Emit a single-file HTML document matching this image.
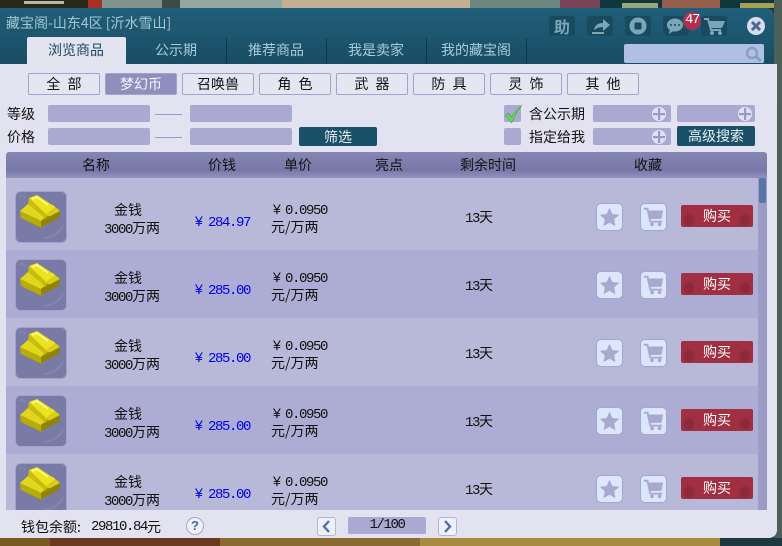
<!DOCTYPE html>
<html><head><meta charset="utf-8">
<style>
html,body{margin:0;padding:0;background:#222}
#p{position:relative;width:782px;height:546px;overflow:hidden;font-family:"WenQuanYi Zen Hei","Noto Sans CJK SC",sans-serif;font-size:14px;color:#111;background:#3a3028}
.a{position:absolute}
.t{position:absolute;white-space:nowrap;line-height:18px;height:18px}
.tab{position:absolute;top:37px;width:100px;height:27px;line-height:27px;text-align:center;color:#a9ccd8;font-size:14px}
.sep{position:absolute;top:38px;width:1px;height:26px;background:#0f3548}
.cat{position:absolute;top:73px;width:70px;height:20px;line-height:20px;border:1px solid #a3a3cd;border-radius:2px;text-align:center;background:#e6e6f2;color:#111;font-size:14px;word-spacing:4px}
.in{position:absolute;height:17px;background:#a9a9d2;border-radius:2px}
.ck{position:absolute;width:17px;height:17px;background:#a9a9d2;border-radius:2px;left:504px}
.btn{position:absolute;background:#1a5068;color:#e8f0f4;text-align:center;border-radius:2px;font-size:14px}
.hb{position:absolute;top:15px;width:26px;height:20px;border:1px solid #1c5a72;border-radius:4px;background:#184a60}
.row{position:absolute;left:0;width:752px;height:68px}
.m{font-family:"Liberation Mono",monospace;font-size:14px;letter-spacing:-1.4px}
.y{display:inline-block;width:12px;font-family:"WenQuanYi Zen Hei",sans-serif;letter-spacing:0}
.b{color:#0000f0}
.b .y{width:13px}
.ib{position:absolute;width:25px;height:26px;background:#dce6fc;border:1px solid #a4a8cc;border-radius:5px}
.buy{position:absolute;left:675px;width:72px;height:22px;line-height:23px;text-align:center;color:#fff;border-radius:2px;font-size:14px;background:radial-gradient(circle at 8px 15px,#8c2a3c 0,#8c2a3c 4px,transparent 7px),radial-gradient(circle at 64px 15px,#8c2a3c 0,#8c2a3c 4px,transparent 7px),#a02f42}
</style></head>
<body><div id="p">
<svg width="0" height="0" style="position:absolute">
<defs>
<symbol id="gold" viewBox="0 0 52 52">
<rect x="0.500" y="0.500" width="51" height="51" rx="5" fill="#7a7aa6" stroke="#a3a3ca"/>
<path d="M28 47q14-1 20-12M4 6q4-3 6 1" stroke="#8484ae" stroke-width="2" fill="none"/>
<polygon points="5,20 13,13 14,7 22,4 40,16 45,20 44,27 33,32 26,37 20,34 6,27" fill="#a89a00"/>
<polygon points="32,13 38,14 45,20 38,26 30,24" fill="#d8ce18"/>
<polygon points="26,30 45,20 44,27 26,36" fill="#8e8400"/>
<polygon points="5,20 13,13 32,24 26,30" fill="#e0d61c"/>
<polygon points="5,20 26,30 26,36 6,27" fill="#b8ac0c"/>
<polygon points="14,7 31,23 31,28 13,13" fill="#c8bc10"/>
<polygon points="14,7 22,4 40,16 31,23" fill="#ece41e"/>
<path d="M17 8l5-2 11 8" stroke="#fffa90" stroke-width="1.500" fill="none"/>
</symbol>
<symbol id="star" viewBox="0 0 27 28"><polygon points="13.500,4 16.600,10.800 24,11.600 18.500,16.500 20,24 13.500,20.200 7,24 8.500,16.500 3,11.600 10.400,10.800" fill="#a9a9d0"/></symbol>
<symbol id="cart" viewBox="0 0 27 28"><path d="M3 5h4l3 14h13" stroke="#a9a9d0" stroke-width="2" fill="none"/><polygon points="8,7 24,7 22,16 10,16" fill="#a9a9d0"/><circle cx="12" cy="22" r="2" fill="#a9a9d0"/><circle cx="20" cy="22" r="2" fill="#a9a9d0"/></symbol>
<symbol id="plus" viewBox="0 0 14 14"><circle cx="7" cy="7" r="7" fill="#dfe2f4"/><rect x="6" y="1" width="2.200" height="12" fill="#9a9ac8"/><rect x="1" y="6" width="12" height="2.200" fill="#9a9ac8"/></symbol>
</defs>
</svg>

<!-- background scene top -->
<div class="a" style="left:0;top:0;width:88px;height:9px;background:#2a2818"></div>
<div class="a" style="left:24px;top:1px;width:40px;height:3px;background:#b8b8a8"></div>
<div class="a" style="left:88px;top:0;width:14px;height:9px;background:#a83020"></div>
<div class="a" style="left:102px;top:0;width:60px;height:9px;background:#7f948c"></div>
<div class="a" style="left:162px;top:0;width:18px;height:9px;background:#3e4a44"></div>
<div class="a" style="left:180px;top:0;width:102px;height:9px;background:#93a8a2"></div>
<div class="a" style="left:282px;top:0;width:188px;height:9px;background:#c4af96"></div>
<div class="a" style="left:470px;top:0;width:90px;height:9px;background:#6f8780"></div>
<div class="a" style="left:560px;top:0;width:40px;height:9px;background:#7a4458"></div>
<div class="a" style="left:600px;top:0;width:62px;height:9px;background:#10383c"></div>
<div class="a" style="left:622px;top:3px;width:36px;height:5px;background:#9aa878"></div>
<div class="a" style="left:662px;top:0;width:58px;height:9px;background:#94604c"></div>
<div class="a" style="left:720px;top:0;width:62px;height:9px;background:#10383c"></div>
<div class="a" style="left:740px;top:3px;width:36px;height:5px;background:#a8a050"></div>
<div class="a" style="left:774px;top:0;width:8px;height:546px;background:#4a6058"></div>
<!-- bottom scene -->
<div class="a" style="left:0;top:538px;width:50px;height:8px;background:#7a5a20"></div>
<div class="a" style="left:50px;top:538px;width:170px;height:8px;background:#6a3a20"></div>
<div class="a" style="left:220px;top:538px;width:200px;height:8px;background:#8a6a30"></div>
<div class="a" style="left:420px;top:538px;width:300px;height:8px;background:#a88a40"></div>
<div class="a" style="left:720px;top:538px;width:62px;height:8px;background:#1e3a40"></div>

<!-- window -->
<div class="a" style="left:0;top:8px;width:774px;height:60px;background:linear-gradient(#215f7a,#174b62);border-radius:0 8px 0 0"></div>
<div class="a" style="left:0;top:64px;width:777px;height:474px;background:#e2e2f0;border-radius:0 0 8px 0"></div>
<div class="a" style="left:0;top:64px;width:777px;height:37px;background:#e3e4f1"></div>

<div class="t" style="left:6px;top:14px;color:#a6c6d2;font-size:14px">藏宝阁-山东4区 [沂水雪山]</div>

<div class="a" style="left:27px;top:37px;width:99px;height:27px;background:#e3e4f0;border-radius:2px 2px 0 0"></div>
<div class="tab" style="left:26px;color:#1a4a60">浏览商品</div>
<div class="tab" style="left:126px">公示期</div>
<div class="tab" style="left:226px">推荐商品</div>
<div class="tab" style="left:326px">我是卖家</div>
<div class="tab" style="left:426px">我的藏宝阁</div>
<div class="sep" style="left:226px"></div>
<div class="sep" style="left:326px"></div>
<div class="sep" style="left:426px"></div>
<div class="sep" style="left:526px"></div>

<!-- header icons -->
<div class="hb" style="left:548px;color:#7aa6b8;text-align:center;line-height:20px;font-size:16px;font-weight:bold">助</div>
<div class="hb" style="left:586px"><svg width="26" height="20"><path d="M5 18h12v-2H5zM7 14q1-7 9-7V3l7 6-7 6v-4q-5 0-9 3z" fill="#7aa6b8"/></svg></div>
<div class="hb" style="left:624px"><svg width="26" height="20"><circle cx="13" cy="10" r="8.500" fill="#7aa6b8"/><rect x="9.500" y="6.500" width="7" height="7" rx="1" fill="#184a60"/></svg></div>
<div class="hb" style="left:662px"><svg width="26" height="20"><ellipse cx="12" cy="9" rx="8" ry="6.500" fill="#7aa6b8"/><path d="M7 13l-1 5 6-4z" fill="#7aa6b8"/><circle cx="8" cy="9" r="1" fill="#184a60"/><circle cx="12" cy="9" r="1" fill="#184a60"/><circle cx="16" cy="9" r="1" fill="#184a60"/></svg></div>
<div class="hb" style="left:700px"><svg width="26" height="20"><path d="M3 3h4l3 11h10" stroke="#7aa6b8" stroke-width="2" fill="none"/><polygon points="8,5 24,5 21,12 10,12" fill="#7aa6b8"/><circle cx="11" cy="17" r="2" fill="#7aa6b8"/><circle cx="19" cy="17" r="2" fill="#7aa6b8"/></svg></div>
<div class="a m" style="left:683px;top:12px;width:18px;height:18px;border-radius:50%;background:#b03050;color:#fff;text-align:center;line-height:17px">47</div>
<svg class="a" style="left:746px;top:16px" width="20" height="20"><circle cx="10" cy="10" r="9" fill="#d8dcf0"/><path d="M6 6l8 8M14 6l-8 8" stroke="#4a6a90" stroke-width="3"/></svg>
<div class="a" style="left:624px;top:44px;width:140px;height:19px;background:#aec0e4;border-radius:2px"></div>
<svg class="a" style="left:745px;top:46px" width="18" height="16"><circle cx="7" cy="7" r="5" fill="none" stroke="#8c9cc4" stroke-width="2.400"/><path d="M11 11l5 4" stroke="#8c9cc4" stroke-width="3"/></svg>

<!-- categories -->
<div class="cat" style="left:28px">全 部</div>
<div class="cat" style="left:105px;background:#8f8fbd;color:#f4f4ff">梦幻币</div>
<div class="cat" style="left:182px">召唤兽</div>
<div class="cat" style="left:259px">角 色</div>
<div class="cat" style="left:336px">武 器</div>
<div class="cat" style="left:413px">防 具</div>
<div class="cat" style="left:490px">灵 饰</div>
<div class="cat" style="left:567px">其 他</div>

<!-- filters -->
<div class="t" style="left:7px;top:105px">等级</div>
<div class="t" style="left:7px;top:128px">价格</div>
<div class="in" style="left:48px;top:105px;width:102px"></div>
<div class="in" style="left:190px;top:105px;width:102px"></div>
<div class="in" style="left:48px;top:128px;width:102px"></div>
<div class="in" style="left:190px;top:128px;width:102px"></div>
<div class="a" style="left:155px;top:114px;width:27px;height:1px;background:#9a9ac8"></div>
<div class="a" style="left:155px;top:137px;width:27px;height:1px;background:#9a9ac8"></div>
<div class="btn" style="left:299px;top:127px;width:78px;height:19px;line-height:21px">筛选</div>

<div class="ck" style="top:105px"></div>
<svg class="a" style="left:504px;top:104px" width="20" height="20"><path d="M1.500 11l3-2 3 4Q11 7 18 1Q12 9 7.500 19z" fill="#5cdc4c" stroke="#3c8c50" stroke-width="0.500"/></svg>
<div class="ck" style="top:128px"></div>
<div class="t" style="left:529px;top:105px">含公示期</div>
<div class="t" style="left:529px;top:128px">指定给我</div>
<div class="in" style="left:593px;top:105px;width:78px"></div>
<div class="in" style="left:677px;top:105px;width:78px"></div>
<div class="in" style="left:593px;top:128px;width:78px"></div>
<svg class="a" style="left:652px;top:107px" width="14" height="14"><use href="#plus"/></svg>
<svg class="a" style="left:738px;top:107px" width="14" height="14"><use href="#plus"/></svg>
<svg class="a" style="left:652px;top:130px" width="14" height="14"><use href="#plus"/></svg>
<div class="btn" style="left:677px;top:126px;width:78px;height:20px;line-height:21px">高级搜索</div>

<!-- table head -->
<div class="a" style="left:6px;top:152px;width:761px;height:26px;background:linear-gradient(#8686b4,#7878a8 70%,#9292be);border-radius:3px 3px 0 0"></div>
<div class="t" style="left:82px;top:156px">名称</div>
<div class="t" style="left:208px;top:156px">价钱</div>
<div class="t" style="left:284px;top:156px">单价</div>
<div class="t" style="left:375px;top:156px">亮点</div>
<div class="t" style="left:460px;top:156px">剩余时间</div>
<div class="t" style="left:634px;top:156px">收藏</div>

<!-- table body -->
<div class="a" style="left:6px;top:178px;width:761px;height:332px;overflow:hidden;background:#9c9cc4">
<div class="a" style="left:753px;top:0;width:7px;height:25px;background:#5676a8;border-radius:2px"></div>

<div class="row" style="top:0;height:72px;background:#b8b8d8">
<svg class="a" style="left:9px;top:13px" width="52" height="52"><use href="#gold"/></svg>
<div class="t" style="left:108px;top:23px">金钱</div>
<div class="t" style="left:98px;top:41px"><span class="m">3000</span>万两</div>
<div class="t m b" style="left:189px;top:34px"><span class="y">¥</span>284.97</div>
<div class="t m" style="left:267px;top:22px"><span class="y">¥</span>0.0950</div>
<div class="t" style="left:265px;top:40px">元/万两</div>
<div class="t" style="left:459px;top:30px"><span class="m">13</span>天</div>
<div class="ib" style="left:590px;top:25px"><svg width="25" height="26"><use href="#star"/></svg></div>
<div class="ib" style="left:634px;top:25px"><svg width="25" height="26"><use href="#cart"/></svg></div>
<div class="buy" style="top:27px">购买</div>
</div>

<div class="row" style="top:72px;background:#acacd4">
<svg class="a" style="left:9px;top:9px" width="52" height="52"><use href="#gold"/></svg>
<div class="t" style="left:108px;top:19px">金钱</div>
<div class="t" style="left:98px;top:37px"><span class="m">3000</span>万两</div>
<div class="t m b" style="left:189px;top:30px"><span class="y">¥</span>285.00</div>
<div class="t m" style="left:267px;top:18px"><span class="y">¥</span>0.0950</div>
<div class="t" style="left:265px;top:36px">元/万两</div>
<div class="t" style="left:459px;top:26px"><span class="m">13</span>天</div>
<div class="ib" style="left:590px;top:21px"><svg width="25" height="26"><use href="#star"/></svg></div>
<div class="ib" style="left:634px;top:21px"><svg width="25" height="26"><use href="#cart"/></svg></div>
<div class="buy" style="top:23px">购买</div>
</div>

<div class="row" style="top:140px;background:#b8b8d8">
<svg class="a" style="left:9px;top:9px" width="52" height="52"><use href="#gold"/></svg>
<div class="t" style="left:108px;top:19px">金钱</div>
<div class="t" style="left:98px;top:37px"><span class="m">3000</span>万两</div>
<div class="t m b" style="left:189px;top:30px"><span class="y">¥</span>285.00</div>
<div class="t m" style="left:267px;top:18px"><span class="y">¥</span>0.0950</div>
<div class="t" style="left:265px;top:36px">元/万两</div>
<div class="t" style="left:459px;top:26px"><span class="m">13</span>天</div>
<div class="ib" style="left:590px;top:21px"><svg width="25" height="26"><use href="#star"/></svg></div>
<div class="ib" style="left:634px;top:21px"><svg width="25" height="26"><use href="#cart"/></svg></div>
<div class="buy" style="top:23px">购买</div>
</div>

<div class="row" style="top:208px;background:#acacd4">
<svg class="a" style="left:9px;top:9px" width="52" height="52"><use href="#gold"/></svg>
<div class="t" style="left:108px;top:19px">金钱</div>
<div class="t" style="left:98px;top:37px"><span class="m">3000</span>万两</div>
<div class="t m b" style="left:189px;top:30px"><span class="y">¥</span>285.00</div>
<div class="t m" style="left:267px;top:18px"><span class="y">¥</span>0.0950</div>
<div class="t" style="left:265px;top:36px">元/万两</div>
<div class="t" style="left:459px;top:26px"><span class="m">13</span>天</div>
<div class="ib" style="left:590px;top:21px"><svg width="25" height="26"><use href="#star"/></svg></div>
<div class="ib" style="left:634px;top:21px"><svg width="25" height="26"><use href="#cart"/></svg></div>
<div class="buy" style="top:23px">购买</div>
</div>

<div class="row" style="top:276px;background:#b8b8d8">
<svg class="a" style="left:9px;top:9px" width="52" height="52"><use href="#gold"/></svg>
<div class="t" style="left:108px;top:19px">金钱</div>
<div class="t" style="left:98px;top:37px"><span class="m">3000</span>万两</div>
<div class="t m b" style="left:189px;top:30px"><span class="y">¥</span>285.00</div>
<div class="t m" style="left:267px;top:18px"><span class="y">¥</span>0.0950</div>
<div class="t" style="left:265px;top:36px">元/万两</div>
<div class="t" style="left:459px;top:26px"><span class="m">13</span>天</div>
<div class="ib" style="left:590px;top:21px"><svg width="25" height="26"><use href="#star"/></svg></div>
<div class="ib" style="left:634px;top:21px"><svg width="25" height="26"><use href="#cart"/></svg></div>
<div class="buy" style="top:23px">购买</div>
</div>
</div>

<!-- footer -->
<div class="t" style="left:21px;top:518px">钱包余额:</div>
<div class="t m" style="left:91px;top:518px">29810.84</div>
<div class="t" style="left:147px;top:518px">元</div>
<div class="a" style="left:186px;top:517px;width:16px;height:16px;border:1px solid #a8a8cc;border-radius:50%;background:#eef0fa;color:#4a6a9a;text-align:center;line-height:16px;font-weight:bold;font-family:'Liberation Sans',sans-serif;font-size:13px">?</div>
<div class="a" style="left:317px;top:517px;width:17px;height:17px;border:1px solid #b4b4d4;border-radius:3px;background:#eef1fc"><svg width="17" height="17"><path d="M11 3L6 8.500l5 5.500" stroke="#5070a8" stroke-width="2.400" fill="none"/></svg></div>
<div class="a m" style="left:348px;top:517px;width:78px;height:17px;background:#a9a9d2;border-radius:2px;text-align:center;line-height:17px">1/100</div>
<div class="a" style="left:438px;top:517px;width:17px;height:17px;border:1px solid #b4b4d4;border-radius:3px;background:#eef1fc"><svg width="17" height="17"><path d="M6 3l5 5.500-5 5.500" stroke="#5070a8" stroke-width="2.400" fill="none"/></svg></div>
</div></body></html>
